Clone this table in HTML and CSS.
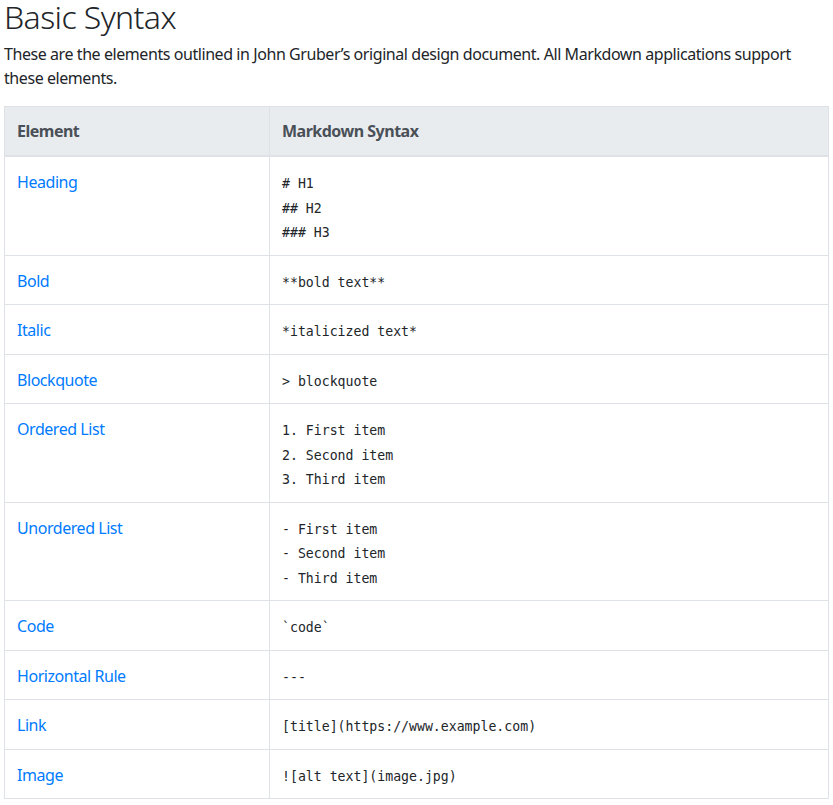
FILE: index.html
```html
<!DOCTYPE html>
<html lang="en">
<head>
<meta charset="utf-8">
<title>Basic Syntax</title>
<link rel="stylesheet" href="styles.css">
</head>
<body>
<main class="page">
  <h2 class="title">Basic Syntax</h2>
  <p class="intro">These are the elements outlined in John Gruber’s original design document. All Markdown applications support these elements.</p>
  <table class="syntax">
    <thead>
      <tr><th class="col-el">Element</th><th>Markdown Syntax</th></tr>
    </thead>
    <tbody>
      <tr><td><a href="#">Heading</a></td><td><code># H1<br>## H2<br>### H3</code></td></tr>
      <tr><td><a href="#">Bold</a></td><td><code>**bold text**</code></td></tr>
      <tr><td><a href="#">Italic</a></td><td><code>*italicized text*</code></td></tr>
      <tr><td><a href="#">Blockquote</a></td><td><code>&gt; blockquote</code></td></tr>
      <tr><td><a href="#">Ordered List</a></td><td><code>1. First item<br>2. Second item<br>3. Third item</code></td></tr>
      <tr><td><a href="#">Unordered List</a></td><td><code>- First item<br>- Second item<br>- Third item</code></td></tr>
      <tr><td><a href="#">Code</a></td><td><code>`code`</code></td></tr>
      <tr><td><a href="#">Horizontal Rule</a></td><td><code>---</code></td></tr>
      <tr><td><a href="#">Link</a></td><td><code>[title](https://www.example.com)</code></td></tr>
      <tr><td><a href="#">Image</a></td><td><code>![alt text](image.jpg)</code></td></tr>
    </tbody>
  </table>
</main>
</body>
</html>
```

FILE: styles.css
```css
html, body {
  margin: 0;
  padding: 0;
  background: #fff;
}
body {
  font-family: "Noto Sans", "Open Sans", sans-serif;
  font-size: 16px;
  line-height: 24px;
  color: #212529;
  letter-spacing: -0.45px;
}
.page {
  padding: 0 4px;
}
.title {
  font-size: 32px;
  font-weight: 300;
  line-height: 34px;
  letter-spacing: -0.6px;
  margin: 0 0 8px 0;
}
.intro {
  margin: 0 0 16px 0;
  letter-spacing: -0.43px;
}
.syntax {
  width: 100%;
  border-collapse: collapse;
  border: 1px solid #dee2e6;
}
.syntax th,
.syntax td {
  text-align: left;
  vertical-align: top;
  padding: 12px;
  border: 1px solid #dee2e6;
  line-height: 24.5px;
}
.syntax th {
  background: #e9ecef;
  color: #495057;
  font-weight: 700;
  border-bottom-width: 2px;
  line-height: 24px;
  letter-spacing: -0.5px;
}
.syntax td {
  padding-top: 13px;
  padding-bottom: 11px;
}
.syntax .col-el {
  width: 240px;
}
.syntax a {
  color: #007bff;
  text-decoration: none;
}
.syntax code {
  font-family: "DejaVu Sans Mono", monospace;
  font-size: 13.2px;
  line-height: 1;
  letter-spacing: 0;
  color: #212529;
}
```
